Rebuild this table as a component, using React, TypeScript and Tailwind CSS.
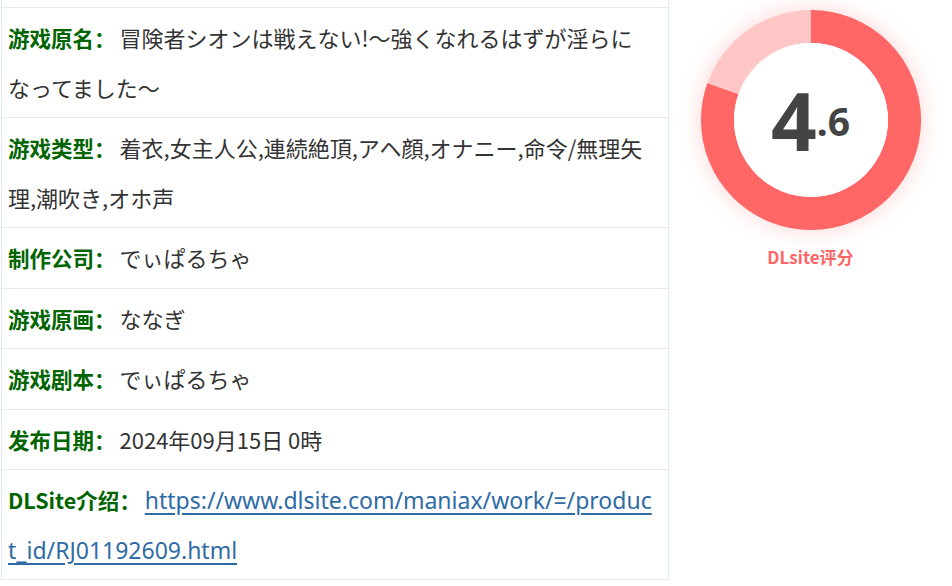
import React from "react";

const rows: { label: string; value: React.ReactNode }[] = [
  { label: "游戏原名：", value: "冒険者シオンは戦えない!～強くなれるはずが淫らになってました～" },
  { label: "游戏类型：", value: "着衣,女主人公,連続絶頂,アヘ顔,オナニー,命令/無理矢理,潮吹き,オホ声" },
  { label: "制作公司：", value: "でぃぱるちゃ" },
  { label: "游戏原画：", value: "ななぎ" },
  { label: "游戏剧本：", value: "でぃぱるちゃ" },
  { label: "发布日期：", value: "2024年09月15日 0時" },
  {
    label: "DLSite介绍：",
    value: (
      <a
        href="#"
        className="text-[#2f6ba4] text-[23px] leading-none underline underline-offset-[4px] break-all font-['Noto_Sans','Liberation_Sans',sans-serif]"
      >
        https://www.dlsite.com/maniax/work/=/product_id/RJ01192609.html
      </a>
    ),
  },
];

function Donut() {
  const r = 93.5;
  const c = 2 * Math.PI * r;
  return (
    <div className="w-[220px] h-[220px] rounded-full shadow-[0_0_22px_rgba(255,102,102,0.28)] relative">
      <svg width="220" height="220" viewBox="0 0 220 220" className="block">
        <circle cx="110" cy="110" r={r} fill="none" stroke="#ffc6c6" strokeWidth="33" />
        <circle
          cx="110"
          cy="110"
          r={r}
          fill="none"
          stroke="#ff6666"
          strokeWidth="33"
          strokeDasharray={`${c * 0.803} ${c}`}
          transform="rotate(-90 110 110)"
        />
        <circle cx="110" cy="110" r="77" fill="#ffffff" />
      </svg>
      <div className="absolute inset-0 flex items-center justify-center text-[#444444] font-bold font-['Noto_Sans','Liberation_Sans',sans-serif]">
        <span className="text-[80px] leading-none">4</span>
        <span className="text-[39px] leading-none">.6</span>
      </div>
    </div>
  );
}

export default function App() {
  return (
    <div className="w-[952px] h-[586px] overflow-hidden bg-white flex font-['Noto_Sans_CJK_SC','Noto_Sans_CJK_JP',sans-serif]">
      <div className="ml-px w-[668px] shrink-0 border-l border-r border-[#e3ecf4] self-start">
        <div className="h-[8px] border-b border-[#e3ecf4]" />
        {rows.map((r) => (
          <div
            key={r.label}
            className="border-b border-[#e3ecf4] pl-[6px] pr-[15px] py-[5px] text-[22px] leading-[49.5px] text-[#333333]"
          >
            <span className="font-bold text-[21.5px] leading-none text-[#006400] mr-[4px]">{r.label}</span>
            {r.value}
          </div>
        ))}
      </div>
      <div className="flex-1 flex flex-col items-center pt-[10px]">
        <Donut />
        <div className="mt-[14px] text-[17px] font-bold text-[#ff6666] font-['Noto_Sans_CJK_SC',sans-serif]">
          DLsite评分
        </div>
      </div>
    </div>
  );
}
